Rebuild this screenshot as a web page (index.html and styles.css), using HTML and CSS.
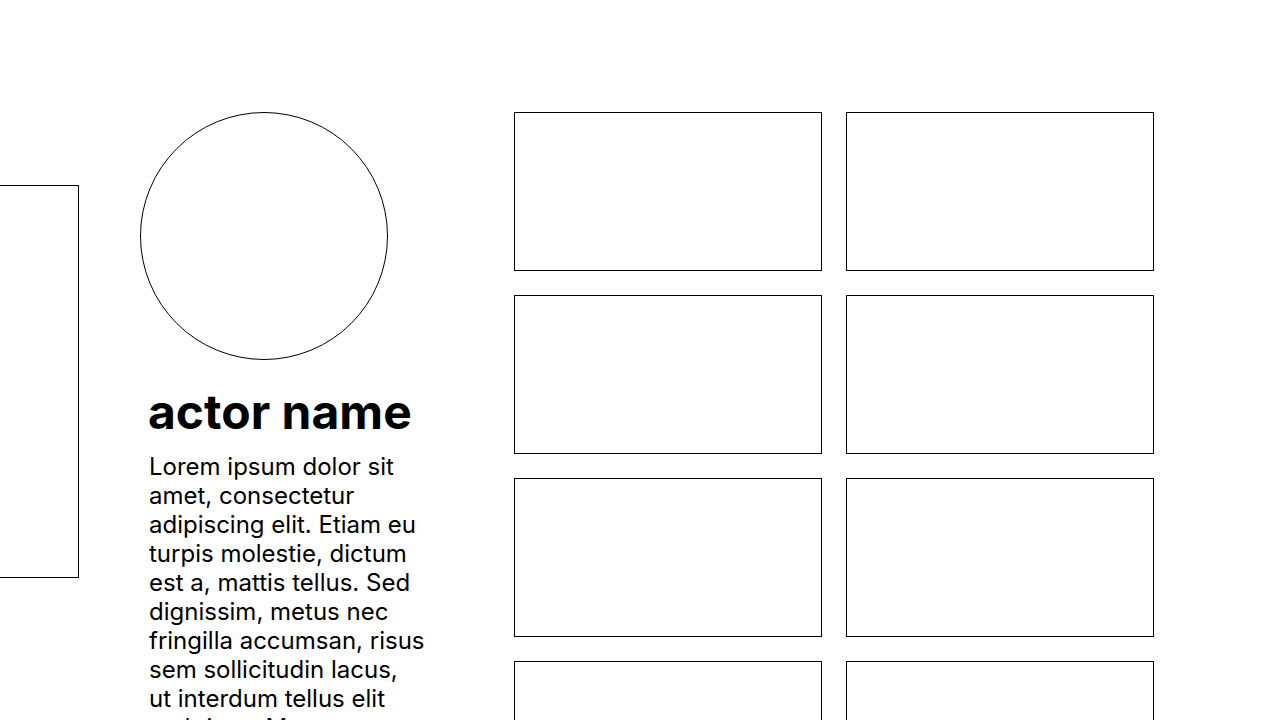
FILE: index.html
```html
<!DOCTYPE html>
<html lang="en">
<head>
    <meta charset="UTF-8">
    <meta name="viewport" content="width=device-width, initial-scale=1.0">
    <title>Actor</title>
    <link rel="stylesheet" href="styles.css">
</head>
<body>
    <main class="page">
        <div class="prev-card"></div>

        <section class="actor">
            <div class="actor-photo"></div>
            <div class="actor-info">
                <h1 class="actor-name">actor name</h1>
                <p class="actor-bio">Lorem ipsum dolor sit amet, consectetur adipiscing elit. Etiam eu turpis molestie, dictum est a, mattis tellus. Sed dignissim, metus nec fringilla accumsan, risus sem sollicitudin lacus, ut interdum tellus elit sed risus. Maecenas eget condimentum velit, sit amet feugiat lectus.</p>
            </div>
        </section>

        <section class="films">
            <div class="film"></div>
            <div class="film"></div>
            <div class="film"></div>
            <div class="film"></div>
            <div class="film"></div>
            <div class="film"></div>
            <div class="film"></div>
            <div class="film"></div>
        </section>
    </main>
</body>
</html>
```

FILE: styles.css
```css
html, body { margin: 0; height: 100%; overflow: hidden; background: #fff; }
body { font-family: Inter, "Noto Sans", sans-serif; color: #000; }

.page { display: flex; align-items: flex-start; padding-top: 112px; }

.prev-card { width: 78px; height: 391px; margin-top: 73px; border: 1px solid #000; border-left: none; flex-shrink: 0; }

.actor { width: 290px; margin-left: 61px; flex-shrink: 0; }
.actor-photo { width: 248px; height: 248px; border: 1px solid #000; border-radius: 50%; box-sizing: border-box; }
.actor-info { width: 277px; padding-left: 8px; }
.actor-name { margin: 23px 0 11px; font-size: 48px; font-weight: 700; line-height: 58px; }
.actor-bio { margin: 0; padding-left: 1px; font-size: 24px; line-height: 29px; }

.films { display: grid; grid-template-columns: repeat(2, 308px); grid-auto-rows: 159px; gap: 24px; margin-left: 84px; }
.film { border: 1px solid #000; box-sizing: border-box; }
```
